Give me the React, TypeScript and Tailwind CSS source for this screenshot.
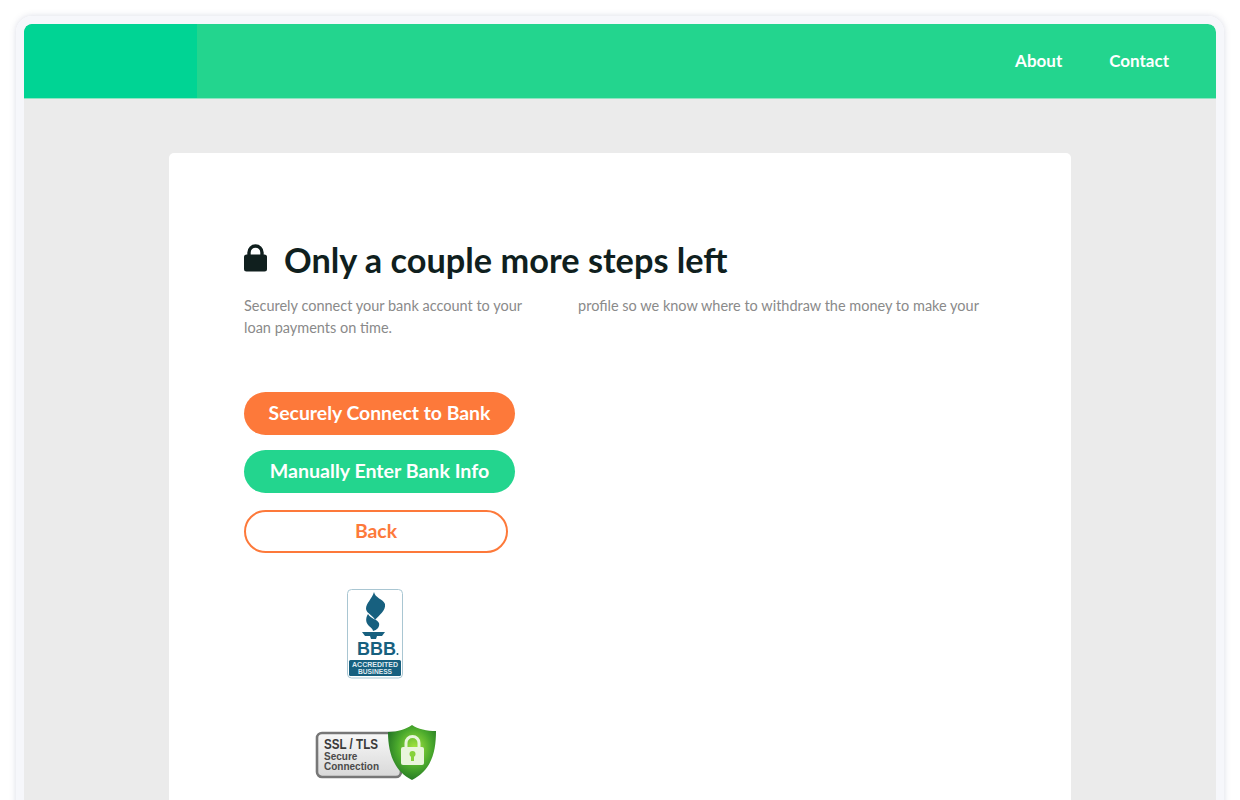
const font = "font-['Lato','Open_Sans',sans-serif]";

function LockIcon() {
  return (
    <svg className="w-[23px] h-[28px] -mt-[5px]" viewBox="0 0 23 28">
      <path d="M5 12V8.5a6.5 6.5 0 0 1 13 0V12" fill="none" stroke="#101f1e" strokeWidth="3.4" />
      <rect x="0" y="10.5" width="23" height="17" rx="2.5" fill="#101f1e" />
    </svg>
  );
}

function BbbBadge() {
  return (
    <svg className="w-[56px] h-[90px]" viewBox="0 0 56 90">
      <rect x="0.5" y="0.5" width="55" height="88.5" rx="4" fill="#fff" stroke="#a9c6d2" />
      <path d="M27 3C25 10 19 14 19 20 20 25 26 26 28 31 32 26 39 22 38 15 36 10 28 9 27 3z" fill="#17607f" />
      <path d="M21 25C18 30 19 34 22 37 24 39 26 40 26 42 30 41 33 38 32 34 30 30 24 30 21 25z" fill="#17607f" />
      <path d="M15 43H38L35 47H30L29 50H24L23 47H18z" fill="#17607f" />
      <text x="10" y="66" fontFamily="Liberation Sans" fontWeight="700" fontSize="18.5" fill="#17607f" textLength="39" lengthAdjust="spacingAndGlyphs">BBB</text>
      <circle cx="50.5" cy="65" r="1" fill="#17607f" />
      <rect x="2" y="71" width="52" height="16" rx="1.5" fill="#17607f" />
      <text x="28" y="78" textAnchor="middle" fontFamily="Liberation Sans" fontWeight="700" fontSize="6.4" fill="#dfeaef" textLength="46" lengthAdjust="spacingAndGlyphs">ACCREDITED</text>
      <text x="28" y="85" textAnchor="middle" fontFamily="Liberation Sans" fontWeight="700" fontSize="6.4" fill="#dfeaef" textLength="34" lengthAdjust="spacingAndGlyphs">BUSINESS</text>
    </svg>
  );
}

function SslBadge() {
  return (
    <svg className="w-[122px] h-[56px]" viewBox="0 0 122 56">
      <defs>
        <linearGradient id="plate" x1="0" y1="0" x2="0" y2="1">
          <stop offset="0" stopColor="#f8f8f8" />
          <stop offset="1" stopColor="#d8d8d8" />
        </linearGradient>
        <radialGradient id="shield" cx="0.55" cy="0.42" r="0.65">
          <stop offset="0" stopColor="#a6e63f" />
          <stop offset="0.55" stopColor="#4aa92c" />
          <stop offset="1" stopColor="#1e6d24" />
        </radialGradient>
      </defs>
      <rect x="2" y="8" width="84" height="44" rx="5" fill="url(#plate)" stroke="#777" strokeWidth="2.6" />
      <text x="9" y="24" fontFamily="Liberation Sans" fontWeight="700" fontSize="15" fill="#3a3a3a" textLength="54" lengthAdjust="spacingAndGlyphs">SSL / TLS</text>
      <text x="9" y="35" fontFamily="Liberation Sans" fontWeight="700" fontSize="10" fill="#4a4a4a">Secure</text>
      <text x="9" y="45" fontFamily="Liberation Sans" fontWeight="700" fontSize="10" fill="#4a4a4a" textLength="55" lengthAdjust="spacingAndGlyphs">Connection</text>
      <path d="M97 0c6 4 15 6 24 6 0 20-4 39-24 49C79 46 73 28 73 7c10 0 18-3 24-7z" fill="url(#shield)" />
      <path d="M91 23v-5a6.5 6.5 0 0 1 13 0v5" fill="none" stroke="#e9f5dc" strokeWidth="3" />
      <rect x="86" y="22" width="23" height="18" rx="2" fill="#e9f5dc" />
      <circle cx="97.5" cy="29" r="3" fill="#86d23a" />
      <rect x="96" y="30" width="3" height="6" fill="#86d23a" />
    </svg>
  );
}

export default function App() {
  return (
    <div className={`${font} h-screen overflow-hidden bg-white pt-4 px-4`}>
      <div className="border-8 border-b-0 border-[#f6f7fb] rounded-t-[16px] shadow-[0_0_6px_rgba(130,135,170,0.3)] h-[800px] overflow-hidden">
        <div className="h-full bg-[#ebebeb] rounded-t-[8px] overflow-hidden">
          <header className="h-[75px] flex bg-[#23d58e] border-b border-[#8fe5c2]">
            <div className="w-[173px] bg-[#00d494]" />
            <nav className="ml-auto flex items-center gap-[47px] pr-[47px] text-[17px] font-bold text-white">
              <a>About</a>
              <a>Contact</a>
            </nav>
          </header>

          <main className="w-[902px] h-[700px] mx-auto mt-[54px] bg-white rounded-[5px] pl-[75px] pr-[90px] pt-[87px]">
            <h1 className="flex items-center gap-[17px] h-[40px] text-[34.3px] font-bold text-[#101f1e]">
              <LockIcon />
              Only a couple more steps left
            </h1>
            <p className="mt-[15px] text-[14.5px] leading-[22px] text-[#8a8a8a]">
              Securely connect your bank account to your
              <span className="inline-block w-[56px]" />
              profile so we know where to withdraw the money to make your loan payments on time.
            </p>

            <div className="mt-[53px] flex flex-col items-start">
              <button className="w-[271px] h-[43px] pb-[2px] rounded-full bg-[#fd793a] text-white text-[19.4px] font-bold">
                Securely Connect to Bank
              </button>
              <button className="mt-[15px] w-[271px] h-[43px] pb-[2px] rounded-full bg-[#23d58e] text-white text-[19.6px] font-bold">
                Manually Enter Bank Info
              </button>
              <button className="mt-[17px] w-[264px] h-[43px] pb-[2px] rounded-full border-2 border-[#fd793a] bg-white text-[#fd793a] text-[19.4px] font-bold">
                Back
              </button>
            </div>

            <div className="mt-[36px] ml-[103px]">
              <BbbBadge />
            </div>
            <div className="mt-[46px] ml-[71px]">
              <SslBadge />
            </div>
          </main>
        </div>
      </div>
    </div>
  );
}
